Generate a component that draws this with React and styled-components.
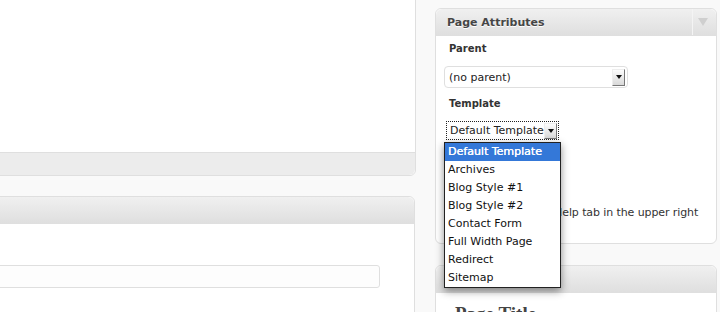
import React from 'react';
import styled, { createGlobalStyle } from 'styled-components';

const GlobalStyle = createGlobalStyle`
  html, body {
    margin: 0;
    padding: 0;
    background: #f9f9f9;
    overflow: hidden;
  }
  body {
    font-family: "DejaVu Sans", Verdana, sans-serif;
    font-size: 11px;
    color: #333;
  }
`;

const Page = styled.div`
  display: flex;
  width: 720px;
  height: 312px;
  overflow: hidden;
`;

const MainColumn = styled.div`
  display: flex;
  flex-direction: column;
  width: 436px;
  margin-left: -20px;
  margin-top: -20px;
  flex-shrink: 0;
`;

const SideColumn = styled.div`
  display: flex;
  flex-direction: column;
  width: 282px;
  margin-left: 19px;
  padding-top: 8px;
  flex-shrink: 0;
`;

const Card = styled.div`
  position: relative;
  background: #fff;
  border: 1px solid #dfdfdf;
  border-radius: 6px;
  width: ${p => p.width || 'auto'};
  margin-bottom: ${p => p.gap || '0'};
`;

const EditorBody = styled.div`
  height: 171px;
  background: #fff;
  border-radius: 6px 6px 0 0;
`;

const EditorFooter = styled.div`
  height: 22px;
  background: #ececec;
  border-top: 1px solid #dfdfdf;
  border-radius: 0 0 6px 6px;
`;

const Header = styled.div`
  display: flex;
  align-items: center;
  height: 26px;
  border-bottom: 1px solid #dfdfdf;
  border-radius: 6px 6px 0 0;
  background: linear-gradient(to bottom, #f0f0f0, #dfdfdf);
`;

const HeaderTitle = styled.h3`
  flex: 1;
  margin: 0;
  padding-left: 11px;
  font-family: "DejaVu Sans", sans-serif;
  font-size: 11px;
  font-weight: bold;
  color: #464646;
  text-shadow: 0 1px 0 #fff;
`;

const Toggle = styled.div`
  width: 23px;
  height: 26px;
  border-left: 1px solid #f4f4f4;
  display: flex;
  align-items: center;
  justify-content: center;
`;

const ToggleArrow = styled.div`
  width: 0;
  height: 0;
  margin-right: 3px;
  border-left: 5px solid transparent;
  border-right: 5px solid transparent;
  border-top: 8px solid #cfcfcf;
`;

const Box = styled.div`
  padding: ${p => p.pad || '0 8px'};
  height: ${p => p.h || 'auto'};
`;

const WideInput = styled.div`
  height: 21px;
  margin-top: 41px;
  width: 397px;
  border: 1px solid #dfdfdf;
  border-radius: 3px;
  background: #fdfdfd;
`;

const Label = styled.p`
  margin: ${p => p.m || '0'};
  padding-left: 5px;
  font-weight: bold;
  font-size: 10px;
  color: #333;
  line-height: 14px;
`;

const Select = styled.div`
  position: relative;
  display: flex;
  align-items: center;
  box-sizing: border-box;
  width: ${p => p.width};
  height: ${p => p.height};
  margin: ${p => p.m || '0'};
  border: ${p => (p.focused ? '1px dotted #222' : '1px solid #dfdfdf')};
  border-radius: ${p => (p.focused ? '0' : '4px')};
  background: #fff;
  padding-left: ${p => (p.focused ? '3px' : '4px')};
  font-size: 11px;
  color: #222;
`;

const SelectText = styled.span`
  flex: 1;
  white-space: nowrap;
  overflow: hidden;
`;

const ArrowButton = styled.span`
  display: flex;
  align-items: center;
  justify-content: center;
  width: 11px;
  height: ${p => p.h || '14px'};
  margin-right: ${p => p.mr || '2px'};
  background: linear-gradient(to bottom, #fdfdfd, #d8d8d8);
  border-right: 1px solid #777;
  border-bottom: 1px solid #777;
  border-left: 1px solid #eee;
  border-top: 1px solid #eee;
`;

const ArrowGlyph = styled.span`
  width: 0;
  height: 0;
  border-left: 3px solid transparent;
  border-right: 3px solid transparent;
  border-top: 4px solid #111;
`;

const Menu = styled.ul`
  position: absolute;
  top: 20px;
  left: -3px;
  width: 115px;
  margin: 0;
  padding: 0;
  list-style: none;
  background: #fff;
  border: 1px solid #222;
  box-shadow: 0 3px 8px rgba(0, 0, 0, 0.45);
  z-index: 5;
`;

const MenuItem = styled.li`
  height: 18px;
  line-height: 18px;
  padding-left: 3px;
  font-size: 11px;
  white-space: nowrap;
  color: ${p => (p.active ? '#fff' : '#111')};
  background: ${p => (p.active ? '#3478d8' : 'transparent')};
  text-shadow: ${p => (p.active ? '0.3px 0 0 #fff' : 'none')};
`;

const Hint = styled.p`
  margin: 10px 0 0;
  padding-left: 1px;
  font-size: 11px;
  letter-spacing: -0.1px;
  line-height: 18px;
  color: #333;
`;

const SmallInput = styled.div`
  width: 40px;
  height: 20px;
  margin: 6px 0 0;
  border: 1px solid #dfdfdf;
  border-radius: 3px;
`;

const PreviewTitle = styled.div`
  padding: 10px 0 0 19px;
  font-family: "Liberation Serif", "DejaVu Serif", serif;
  font-size: 19px;
  font-weight: bold;
  color: #444;
`;

const templates = [
  'Default Template',
  'Archives',
  'Blog Style #1',
  'Blog Style #2',
  'Contact Form',
  'Full Width Page',
  'Redirect',
  'Sitemap',
];

export default function App() {
  return (
    <Page>
      <GlobalStyle />
      <MainColumn>
        <Card gap="20px">
          <EditorBody />
          <EditorFooter />
        </Card>
        <Card width="433px">
          <Header />
          <Box pad="0" h="120px">
            <WideInput />
          </Box>
        </Card>
      </MainColumn>

      <SideColumn>
        <Card gap="21px">
          <Header>
            <HeaderTitle>Page Attributes</HeaderTitle>
            <Toggle>
              <ToggleArrow />
            </Toggle>
          </Header>
          <Box pad="6px 8px 10px" h="191px">
            <Label m="0 0 10px">Parent</Label>
            <Select width="184px" height="22px">
              <SelectText>(no parent)</SelectText>
              <ArrowButton h="15px">
                <ArrowGlyph />
              </ArrowButton>
            </Select>
            <Label m="9px 0 10px">Template</Label>
            <Select width="113px" height="19px" m="0 0 0 2px" focused>
              <SelectText>Default Template</SelectText>
              <ArrowButton mr="1px">
                <ArrowGlyph />
              </ArrowButton>
              <Menu>
                {templates.map((t, i) => (
                  <MenuItem key={t} active={i === 0}>{t}</MenuItem>
                ))}
              </Menu>
            </Select>
            <Label m="12px 0 0">Order</Label>
            <SmallInput />
            <Hint>Need help? Use the Help tab in the upper right of your screen.</Hint>
          </Box>
        </Card>
        <Card>
          <Header />
          <PreviewTitle>Page Title</PreviewTitle>
        </Card>
      </SideColumn>
    </Page>
  );
}
